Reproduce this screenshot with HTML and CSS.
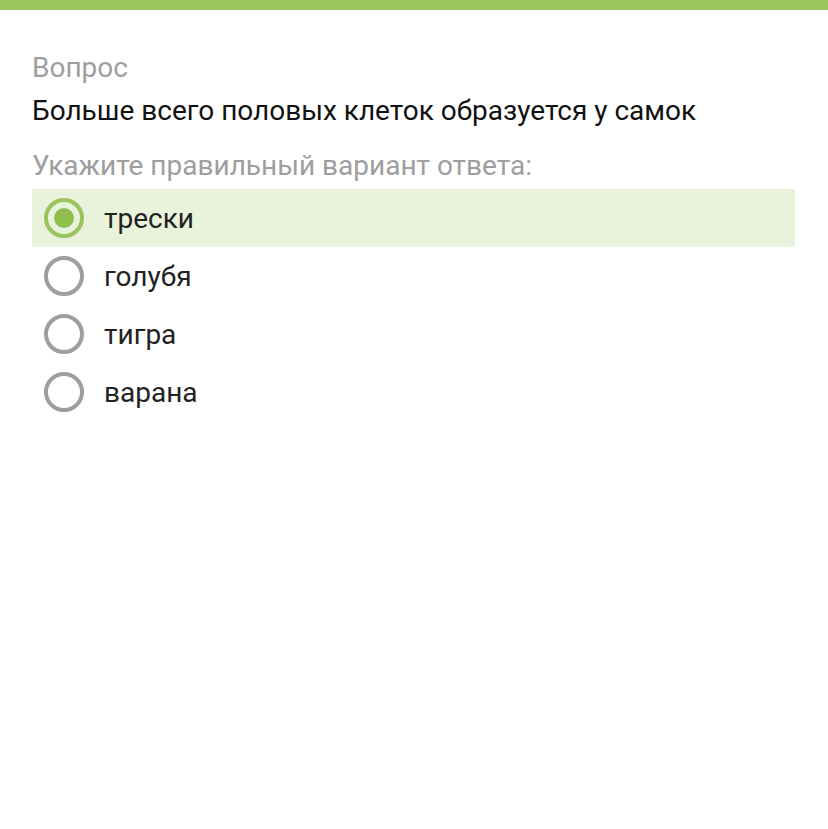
FILE: index.html
```html
<!DOCTYPE html>
<html lang="ru">
<head>
    <meta charset="UTF-8">
    <meta name="viewport" content="width=device-width, initial-scale=1.0">
    <title>Вопрос</title>
    <link rel="stylesheet" href="styles.css">
</head>
<body>
    <div class="top-bar"></div>
    <div class="quiz">
        <div class="label">Вопрос</div>
        <div class="question">Больше всего половых клеток образуется у самок</div>
        <div class="hint">Укажите правильный вариант ответа:</div>
        <div class="options">
            <div class="option selected"><span class="radio"></span><span>трески</span></div>
            <div class="option"><span class="radio"></span><span>голубя</span></div>
            <div class="option"><span class="radio"></span><span>тигра</span></div>
            <div class="option"><span class="radio"></span><span>варана</span></div>
        </div>
    </div>
</body>
</html>
```

FILE: styles.css
```css
body {
    margin: 0;
    padding: 0;
    background-color: #fff;
    font-family: Roboto, "Noto Sans", sans-serif;
}

.top-bar {
    height: 10px;
    background-color: #9cc45d;
}

.quiz {
    padding: 42px 33px 0 32px;
}

.label {
    font-size: 28px;
    line-height: 32px;
    color: #9e9e9e;
}

.question {
    font-size: 28px;
    line-height: 32px;
    color: #111;
    margin-top: 11px;
}

.hint {
    font-size: 28px;
    line-height: 32px;
    color: #9e9e9e;
    margin-top: 23px;
}

.options {
    margin-top: 7px;
}

.option {
    display: flex;
    align-items: center;
    gap: 20px;
    height: 58px;
    padding-left: 12px;
    font-size: 28px;
    color: #222;
}

.option.selected {
    background-color: #e9f3dc;
}

.radio {
    width: 32px;
    height: 32px;
    border: 4px solid #9e9e9e;
    border-radius: 50%;
    box-sizing: content-box;
    position: relative;
}

.selected .radio {
    border-color: #9cc45d;
}

.selected .radio::after {
    content: "";
    position: absolute;
    left: 6px;
    top: 6px;
    width: 20px;
    height: 20px;
    border-radius: 50%;
    background-color: #8fbf4f;
}
```
